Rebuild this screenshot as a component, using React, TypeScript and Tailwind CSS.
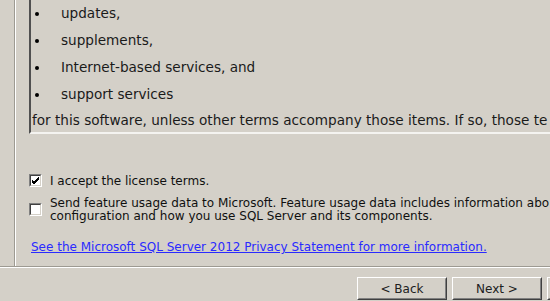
import React from 'react';

const bullets = ['updates,', 'supplements,', 'Internet-based services, and', 'support services'];

const Checkbox = ({ checked }: { checked?: boolean }) => (
    <div className="w-[13px] h-[13px] shrink-0 border border-t-[#808080] border-l-[#808080] border-b-white border-r-white bg-[#d4d0c8]">
        <div className="w-full h-full border border-t-[#404040] border-l-[#404040] border-b-[#d4d0c8] border-r-[#d4d0c8] bg-white flex items-center justify-center">
            {checked && (
                <svg width="9" height="9" viewBox="0 0 9 9">
                    <path d="M1 4 L3 6 L8 1 M1 5 L3 7 L8 2 M1 6 L3 8 L8 3" stroke="#000" strokeWidth="1" fill="none" />
                </svg>
            )}
        </div>
    </div>
);

const WinButton = ({ label }: { label?: string }) => (
    <div className="w-[90px] h-[23px] shrink-0 border border-t-white border-l-white border-b-[#404040] border-r-[#404040]">
        <div className="w-full h-full border border-t-[#d4d0c8] border-l-[#d4d0c8] border-b-[#808080] border-r-[#808080] flex items-center justify-center text-[12px] text-[#202020]">
            {label}
        </div>
    </div>
);

export default function App() {
    return (
        <div
            className="w-[550px] h-[301px] bg-[#d4d0c8] overflow-hidden flex flex-col"
            style={{ fontFamily: '"DejaVu Sans", Verdana, sans-serif' }}
        >
            {/* Main pane */}
            <div className="h-[266px] shrink-0 pl-[14px] flex overflow-hidden">
                <div className="flex-1 min-w-0 border-l border-[#9d9a92] shadow-[inset_1px_0_0_#ffffff] pl-[14px] flex flex-col">
                    {/* License text box */}
                    <div className="border-l-2 border-[#505050] border-b-2 border-b-[#f4f3f0] whitespace-nowrap text-[13.6px] text-[#1a1a1a]">
                        {bullets.map(b => (
                            <div key={b} className="h-[27px] flex items-center">
                                <span className="w-[4px] h-[4px] rounded-full bg-black ml-[4px] mr-[22px]" />
                                <span>{b}</span>
                            </div>
                        ))}
                        <div className="h-[24px] flex items-center pl-[1px]">
                            for this software, unless other terms accompany those items. If so, those te
                        </div>
                    </div>

                    {/* Options */}
                    <div className="mt-[40px] flex flex-col text-[12px] leading-[12px] text-[#101010] whitespace-nowrap">
                        <div className="flex items-center gap-[8px]">
                            <Checkbox checked />
                            <span>I accept the license terms.</span>
                        </div>
                        <div className="flex items-start gap-[8px] mt-[10px] leading-[13px]">
                            <div className="mt-[6px]">
                                <Checkbox />
                            </div>
                            <div>
                                <div>Send feature usage data to Microsoft. Feature usage data includes information abo</div>
                                <div>configuration and how you use SQL Server and its components.</div>
                            </div>
                        </div>
                        <a className="mt-[18px] ml-[2px] text-[#2a2aff] underline">
                            See the Microsoft SQL Server 2012 Privacy Statement for more information.
                        </a>
                    </div>
                </div>
            </div>

            {/* Separator */}
            <div className="h-px bg-[#9d9a92]" />
            <div className="h-px bg-white" />

            {/* Buttons */}
            <div className="flex gap-[5px] pl-[357px] pt-[9px]">
                <WinButton label="< Back" />
                <WinButton label="Next >" />
                <WinButton />
            </div>
        </div>
    );
}
